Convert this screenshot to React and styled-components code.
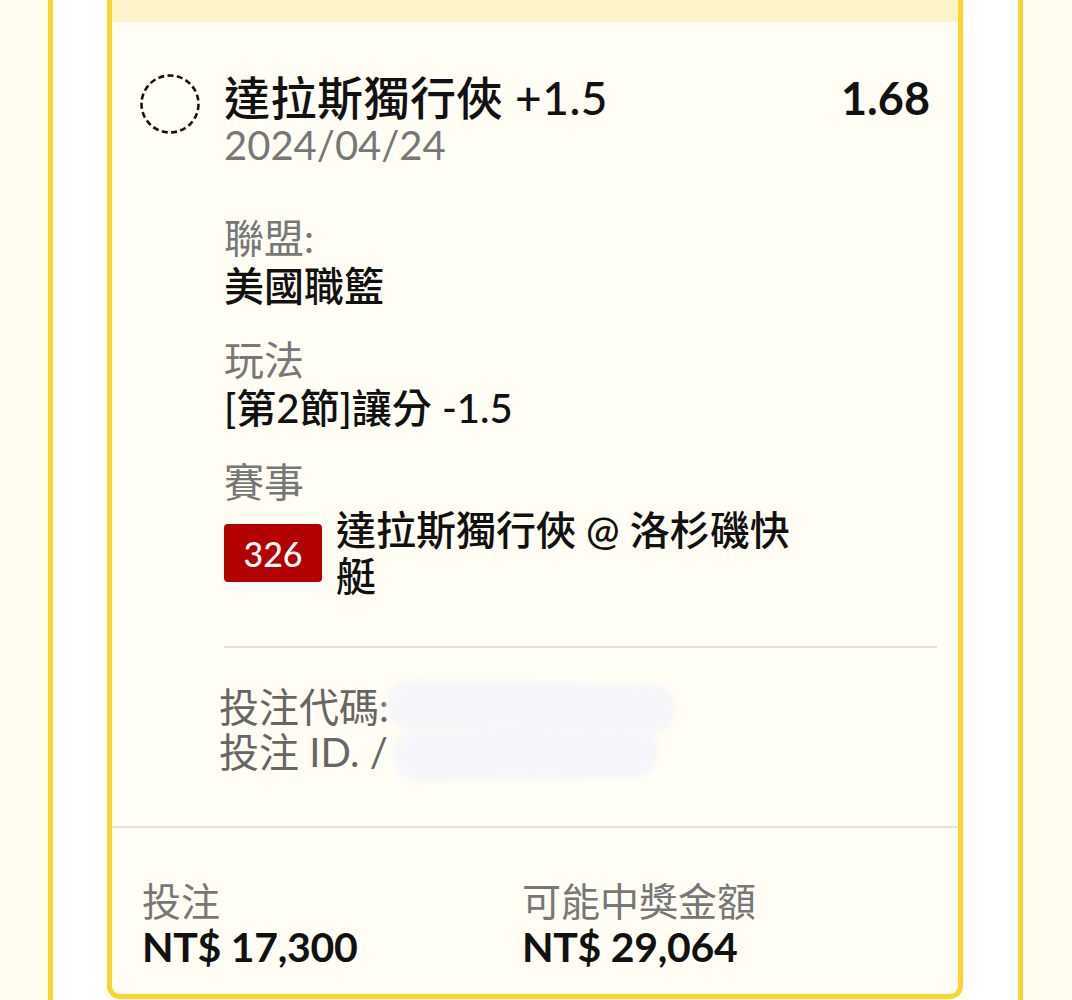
import React from 'react'
import styled, { createGlobalStyle } from 'styled-components'

const GlobalStyle = createGlobalStyle`
  body {
    margin: 0;
    background: #fffcf0;
    font-family: Lato, "Noto Sans CJK TC", sans-serif;
  }
`

const Frame = styled.div`
  margin: 0 49px 0 48px;
  min-height: 1000px;
  background: #ffffff;
  border-left: 5px solid #fcd32f;
  border-right: 5px solid #fcd32f;
  padding: 0 55px 2px 54px;
  box-sizing: border-box;
  overflow: hidden;
`

const Card = styled.div`
  background: #fffdf4;
  border: 5px solid #fcd32f;
  border-top: none;
  border-radius: 0 0 13px 13px;
`

const Band = styled.div`
  height: 22px;
  background: #fff3c9;
`

const Body = styled.div`
  display: grid;
  grid-template-columns: 60px 1fr;
  column-gap: 24px;
  padding: 51px 28px 0 28px;
`

const Ring = styled.svg`
  width: 60px;
  height: 60px;
  margin-top: 1px;
`

const Info = styled.div`
  display: flex;
  flex-direction: column;
  min-width: 0;
`

const TitleLine = styled.div`
  display: flex;
  justify-content: space-between;
  align-items: center;
  height: 50px;
`

const Title = styled.div`
  font-size: 46px;
  line-height: 50px;
  font-weight: 500;
  color: #111;
  letter-spacing: 0.5px;
`

const Odds = styled.div`
  font-size: 45px;
  line-height: 50px;
  font-weight: 700;
  color: #111;
`

const DateText = styled.div`
  font-size: 40px;
  line-height: 44px;
  color: #777;
`

const Details = styled.div`
  display: flex;
  flex-direction: column;
  gap: 26px;
  margin-top: 47px;
  margin-right: -7px;
`

const Field = styled.div`
  display: flex;
  flex-direction: column;
`

const Label = styled.div`
  font-size: 40px;
  line-height: 48px;
  color: #777;
`

const Value = styled.div`
  font-size: 40px;
  line-height: 48px;
  font-weight: 500;
  color: #111;
`

const MatchRow = styled.div`
  display: flex;
  align-items: center;
  gap: 14px;
  margin-top: 1px;
`

const Badge = styled.div`
  flex: none;
  width: 98px;
  height: 58px;
  border-radius: 4px;
  background: #b30000;
  color: #fff;
  font-size: 34px;
  font-weight: 500;
  display: flex;
  align-items: center;
  justify-content: center;
`

const MatchName = styled.div`
  width: 470px;
  font-size: 40px;
  line-height: 46px;
  font-weight: 500;
  color: #111;
`

const Divider = styled.div`
  height: 2px;
  background: #e4e1d9;
  margin-top: 21px;
`

const Codes = styled.div`
  position: relative;
  margin: 37px 0 51px -5px;
  font-size: 40px;
  line-height: 45px;
  color: #666;
`

const Smudge = styled.span`
  position: absolute;
  background: #f4f6f9;
  border-radius: 22px;
  filter: blur(3px);
  transform: rotate(${p => p.$tilt}deg);
`

const Separator = styled.div`
  height: 2px;
  background: #e6e3db;
`

const Footer = styled.div`
  display: grid;
  grid-template-columns: 380px 1fr;
  padding: 50px 30px 24px 30px;
`

const Stat = styled.div`
  display: flex;
  flex-direction: column;
`

const StatLabel = styled.div`
  font-size: 39px;
  line-height: 46px;
  color: #777;
`

const StatValue = styled.div`
  font-size: 41px;
  line-height: 46px;
  font-weight: 700;
  color: #111;
  letter-spacing: -0.3px;
`

export default function App() {
  return (
    <>
      <GlobalStyle />
      <Frame>
        <Card>
          <Band />
          <Body>
            <Ring viewBox="0 0 60 60">
              <circle cx="30" cy="30" r="28.5" fill="none" stroke="#111" strokeWidth="2.6" strokeDasharray="6 3.4" />
            </Ring>
            <Info>
              <TitleLine>
                <Title>達拉斯獨行俠 +1.5</Title>
                <Odds>1.68</Odds>
              </TitleLine>
              <DateText>2024/04/24</DateText>

              <Details>
                <Field>
                  <Label>聯盟:</Label>
                  <Value>美國職籃</Value>
                </Field>
                <Field>
                  <Label>玩法</Label>
                  <Value>[第2節]讓分 -1.5</Value>
                </Field>
                <Field>
                  <Label>賽事</Label>
                  <MatchRow>
                    <Badge>326</Badge>
                    <MatchName>達拉斯獨行俠 @ 洛杉磯快艇</MatchName>
                  </MatchRow>
                </Field>
                <Divider />
              </Details>

              <Codes>
                <div>投注代碼: </div>
                <div>投注 ID. / </div>
                <Smudge $tilt={1} style={{ left: 168, top: -2, width: 288, height: 48 }} />
                <Smudge $tilt={-1} style={{ left: 176, top: 44, width: 262, height: 50 }} />
              </Codes>
            </Info>
          </Body>
          <Separator />
          <Footer>
            <Stat>
              <StatLabel>投注</StatLabel>
              <StatValue>NT$ 17,300</StatValue>
            </Stat>
            <Stat>
              <StatLabel>可能中獎金額</StatLabel>
              <StatValue>NT$ 29,064</StatValue>
            </Stat>
          </Footer>
        </Card>
      </Frame>
    </>
  )
}
